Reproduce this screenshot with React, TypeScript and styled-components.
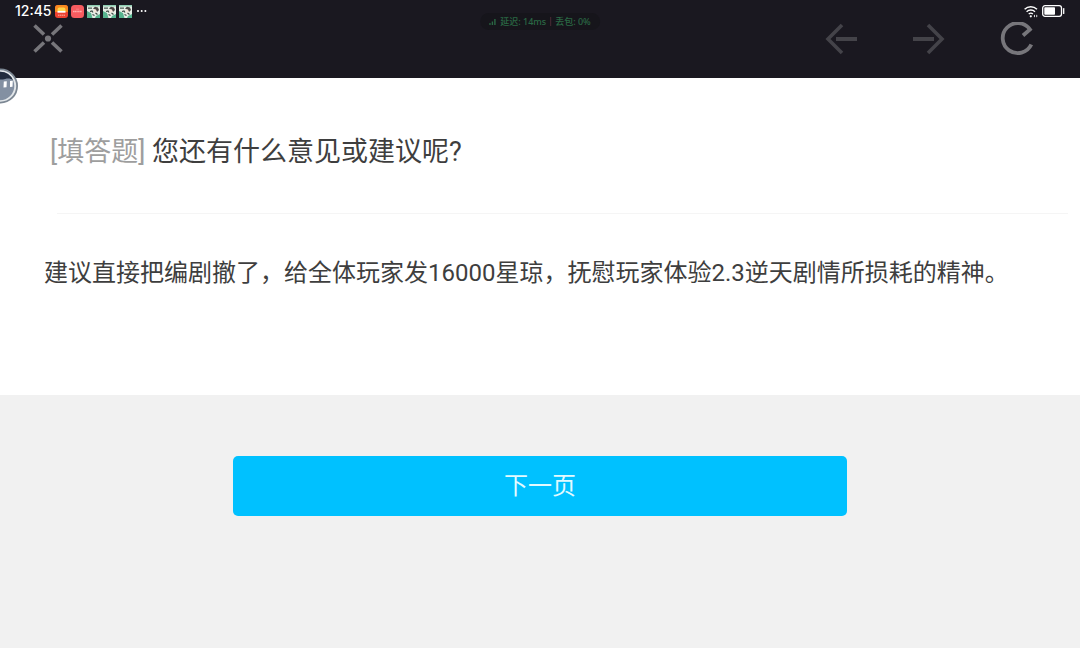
import React from "react";
import styled, { createGlobalStyle } from "styled-components";

const GlobalStyle = createGlobalStyle`
  *, *::before, *::after { box-sizing: border-box; }
  body {
    margin: 0;
    background: #f1f1f1;
    color: #3e3e3e;
    font-family: Roboto, "Noto Sans CJK SC", sans-serif;
  }
`;

const Page = styled.div`
  position: relative;
  min-height: 100vh;
  overflow-x: hidden;
`;

const Header = styled.header`
  background: #1a1820;
  padding-bottom: 22px;
`;

const StatusBar = styled.div`
  display: flex;
  align-items: center;
  justify-content: space-between;
  height: 22px;
  padding: 0 15px;
  color: #fff;
`;

const StatusGroup = styled.div`
  display: flex;
  align-items: center;
  gap: 3px;
`;

const Clock = styled.time`
  width: 37px;
  font: 500 14px/22px Inter, sans-serif;
`;

const NetworkPill = styled.div`
  position: absolute;
  top: 13px;
  left: 50%;
  transform: translateX(-50%);
  display: flex;
  align-items: center;
  gap: 4px;
  height: 17px;
  padding: 0 9px;
  border-radius: 9px;
  background: #16151b;
  color: #2a6844;
  font: 500 9px/17px "Noto Sans", "Noto Sans CJK SC", sans-serif;
  white-space: nowrap;
`;

const PillDivider = styled.span`
  width: 1px;
  height: 9px;
  background: #4b2a35;
`;

const Toolbar = styled.nav`
  display: flex;
  align-items: center;
  justify-content: space-between;
  height: 34px;
  padding: 0 46px 0 31px;
`;

const ToolGroup = styled.div`
  display: flex;
  align-items: center;
  gap: 54px;
`;

const ToolButton = styled.button<{ $color: string }>`
  display: flex;
  padding: 0;
  border: 0;
  background: none;
  color: ${(p) => p.$color};
  cursor: pointer;
`;

const Assistant = styled.button`
  position: absolute;
  top: 68px;
  left: -18px;
  display: flex;
  padding: 0;
  border: 0;
  background: none;
`;

const Card = styled.section`
  padding: 54px 12px 60px 44px;
  background: #fff;
`;

const Question = styled.label`
  display: block;
  padding: 0 6px 40px;
  font-size: 27px;
  line-height: 41px;
`;

const Kind = styled.span`
  color: #9e9e9e;
`;

const Divider = styled.hr`
  height: 1px;
  margin: 0 0 0 13px;
  border: 0;
  background: #f5f5f5;
`;

const Answer = styled.textarea`
  display: block;
  width: 100%;
  height: 80px;
  margin-top: 41px;
  padding: 0;
  border: 0;
  outline: 0;
  resize: none;
  background: transparent;
  color: inherit;
  font: 400 24px/36px Roboto, "Noto Sans CJK SC", sans-serif;
`;

const Footer = styled.div`
  display: flex;
  justify-content: center;
  padding: 61px 20px;
`;

const NextButton = styled.button`
  width: 59%;
  height: 60px;
  padding: 0;
  border: 0;
  border-radius: 5px;
  background: #00c1ff;
  color: #e2faff;
  font: 400 24px/60px Roboto, "Noto Sans CJK SC", sans-serif;
  cursor: pointer;
`;

const SunsetAppIcon = () => (
  <svg width="13" height="13" viewBox="0 0 13 13" aria-hidden="true">
    <rect width="13" height="13" rx="3" fill="#ee4130" />
    <path d="M0 7V3a3 3 0 0 1 3-3h7a3 3 0 0 1 3 3v4z" fill="#f98a1f" />
    <path d="M2.500 6V4.500a2 2 0 0 1 2-2h4a2 2 0 0 1 2 2V6z" fill="#ffd64a" />
    <path d="M2.500 6.800h8" stroke="#fff" strokeWidth="1.8" />
    <path d="M3 10.200h7" stroke="#fbb5a4" strokeWidth="1" strokeDasharray="1.500 .5" />
  </svg>
);

const RedAppIcon = () => (
  <svg width="13" height="13" viewBox="0 0 13 13" aria-hidden="true">
    <rect width="13" height="13" rx="3.5" fill="#f65c60" />
    <path d="M2 6.500h9" stroke="#ffaaa9" strokeWidth="1.3" strokeDasharray="1.400 .3" />
    <path d="M5 4.200h3" stroke="#fa8588" strokeWidth=".8" />
  </svg>
);

const GameAppIcon = () => (
  <svg width="13" height="13" viewBox="0 0 13 13" aria-hidden="true">
    <rect width="13" height="13" fill="#e6efe6" />
    <path d="M0 6l4 2 1.500 5H0z" fill="#57b48f" />
    <path d="M9 11l4-2v4H8z" fill="#57b48f" />
    <path d="M0 0h13v1.500H0z" fill="#8fcdb2" />
    <path d="M1 2.500h4v1.300H1z" fill="#53635c" />
    <path d="M6 3.500l2-1.700 3 .6 1 2.600-2 2-1-2z" fill="#4b4644" />
    <path d="M6.500 4.500h2.500l.5 2.500-2 1z" fill="#f7e5d8" />
    <path d="M3 6.500l2-.5 1 1.500M8.500 8l2 1.500M5.500 9.500l2 1" fill="none" stroke="#39453f" strokeWidth="1.1" />
  </svg>
);

const MoreIcon = () => (
  <svg width="14" height="13" viewBox="0 0 14 13" fill="#fff" aria-hidden="true">
    <circle cx="3" cy="6" r="1" />
    <circle cx="6.7" cy="6" r="1" />
    <circle cx="10.4" cy="6" r="1" />
  </svg>
);

const WifiIcon = () => (
  <svg width="15" height="13" viewBox="0 0 15 13" fill="none" stroke="#fff" aria-hidden="true">
    <path d="M.6 4.200a9.200 9.200 0 0 1 12.400 0" strokeWidth="1.5" />
    <path d="M2.600 6.700a6.200 6.200 0 0 1 8.400 0" strokeWidth="1.4" />
    <path d="M4.700 9a3.200 3.200 0 0 1 4.200 0" strokeWidth="1.3" />
    <circle cx="6.8" cy="11.3" r="1.1" fill="#fff" stroke="none" />
    <path d="M11 9.500l-1.300 1.500 1.300 1.500zM12.300 9.500l1.300 1.500-1.300 1.500z" fill="#fff" stroke="none" />
  </svg>
);

const BatteryIcon = () => (
  <svg width="23" height="12" viewBox="0 0 23 12" fill="none" aria-hidden="true">
    <rect x=".7" y=".7" width="18.8" height="10.6" rx="2.3" stroke="#fff" strokeWidth="1.3" />
    <rect x="2.3" y="2.3" width="10.7" height="7.4" rx=".8" fill="#fff" />
    <path d="M21.700 3.600v4.800" stroke="#fff" strokeWidth="1.3" strokeLinecap="round" />
  </svg>
);

const SignalIcon = () => (
  <svg width="7" height="8" viewBox="0 0 7 8" fill="currentColor" aria-hidden="true">
    <path d="M0 5h1.400v2H0zM2.500 3.500h1.400V7H2.500zM5 1h1.400v6H5z" />
  </svg>
);

const CloseIcon = () => (
  <svg width="34" height="34" viewBox="0 0 34 34" fill="none" stroke="currentColor" strokeWidth="3.6" aria-hidden="true">
    <path d="M3.500 3.500l9.500 9M30.500 3.500l-9.500 9M3.500 29.500l9.500-9M30.500 29.500l-9.500-9" />
    <circle cx="17" cy="16.5" r="3.1" fill="currentColor" stroke="none" />
  </svg>
);

const BackIcon = () => (
  <svg width="34" height="34" viewBox="0 0 34 34" fill="none" stroke="currentColor" strokeWidth="3.6" aria-hidden="true">
    <path d="M18 3L4 17l14 14" />
    <path d="M12 17h21" strokeWidth="4" />
  </svg>
);

const ForwardIcon = () => (
  <svg width="34" height="34" viewBox="0 0 34 34" fill="none" stroke="currentColor" strokeWidth="3.6" aria-hidden="true">
    <path d="M16 3l14 14-14 14" />
    <path d="M1 17h21" strokeWidth="4" />
  </svg>
);

const ReloadIcon = () => (
  <svg width="34" height="34" viewBox="0 0 34 34" fill="none" stroke="currentColor" strokeWidth="3.8" aria-hidden="true">
    <path d="M31.300 22.500A15 15 0 1 1 30 7.500L23 13.500" />
  </svg>
);

const AssistantIcon = () => (
  <svg width="37" height="37" viewBox="0 0 37 37" aria-hidden="true">
    <circle cx="18.5" cy="18" r="16.6" fill="#e3e7ea" stroke="#7c8793" strokeWidth="1.8" />
    <circle cx="18" cy="18" r="14.3" fill="#8390a2" />
    <path d="M4.800 12.500a14.300 14.300 0 0 1 26.400 0c-2-2-5-2.500-8-1.500-3 .8-8 .5-10 0-3-1-6.400-.5-8.400 1.500z" fill="#222c3e" />
    <path d="M21.800 13.500l3-.3-.3 6-3 .3zM28 13l2.800-.3-.3 6-2.500.3z" fill="#fff" />
  </svg>
);

export default function App() {
  return (
    <Page lang="zh-CN">
      <GlobalStyle />
      <Header>
        <StatusBar>
          <StatusGroup>
            <Clock>12:45</Clock>
            <SunsetAppIcon />
            <RedAppIcon />
            <GameAppIcon />
            <GameAppIcon />
            <GameAppIcon />
            <MoreIcon />
          </StatusGroup>
          <StatusGroup>
            <WifiIcon />
            <BatteryIcon />
          </StatusGroup>
        </StatusBar>
        <Toolbar>
          <ToolButton $color="#77767b" aria-label="关闭">
            <CloseIcon />
          </ToolButton>
          <ToolGroup>
            <ToolButton $color="#444349" aria-label="后退">
              <BackIcon />
            </ToolButton>
            <ToolButton $color="#444349" aria-label="前进">
              <ForwardIcon />
            </ToolButton>
            <ToolButton $color="#77767b" aria-label="刷新">
              <ReloadIcon />
            </ToolButton>
          </ToolGroup>
        </Toolbar>
      </Header>
      <NetworkPill>
        <SignalIcon />
        <span>延迟: 14ms</span>
        <PillDivider />
        <span>丢包: 0%</span>
      </NetworkPill>
      <main>
        <Card>
          <Question htmlFor="answer">
            <Kind>[填答题]</Kind> 您还有什么意见或建议呢?
          </Question>
          <Divider />
          <Answer
            id="answer"
            spellCheck={false}
            defaultValue="建议直接把编剧撤了，给全体玩家发16000星琼，抚慰玩家体验2.3逆天剧情所损耗的精神。"
          />
        </Card>
        <Footer>
          <NextButton type="button">下一页</NextButton>
        </Footer>
      </main>
      <Assistant aria-label="助手">
        <AssistantIcon />
      </Assistant>
    </Page>
  );
}
